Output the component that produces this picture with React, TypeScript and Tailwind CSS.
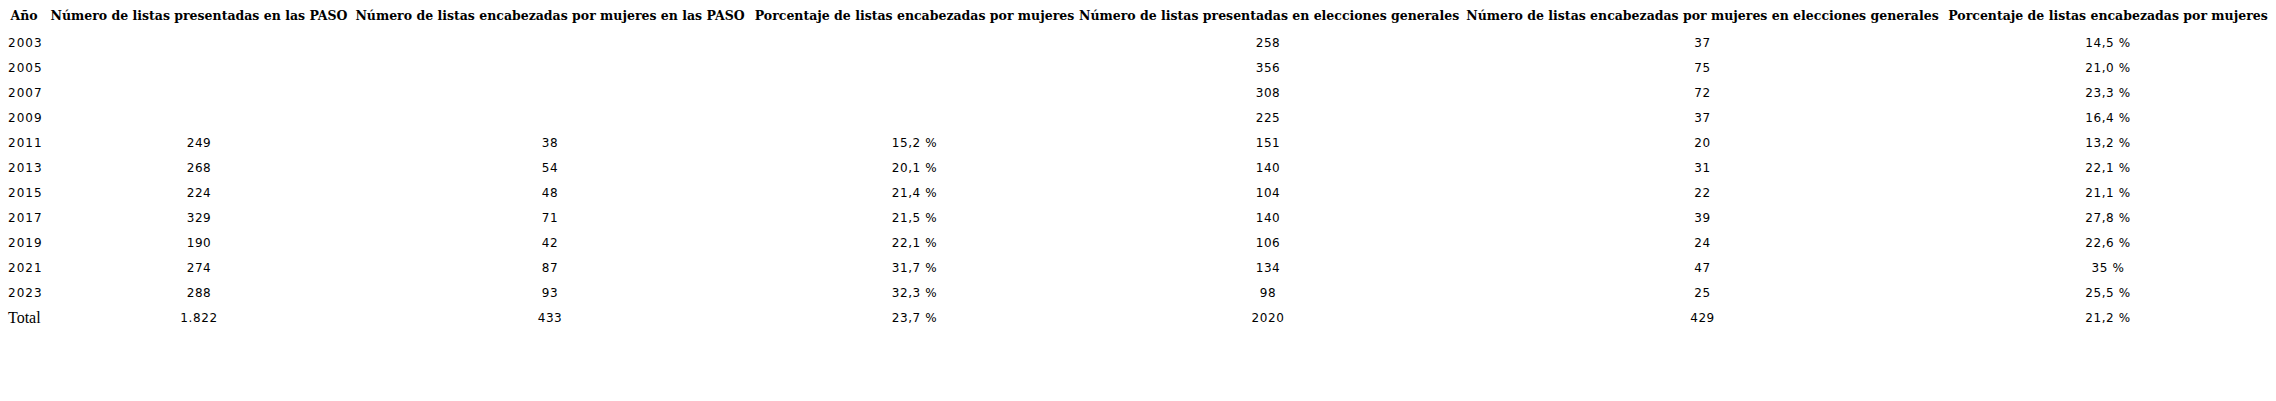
import React from "react";

const headers = [
  "Año",
  "Número de listas presentadas en las PASO",
  "Número de listas encabezadas por mujeres en las PASO",
  "Porcentaje de listas encabezadas por mujeres",
  "Número de listas presentadas en elecciones generales",
  "Número de listas encabezadas por mujeres en elecciones generales",
  "Porcentaje de listas encabezadas por mujeres",
];

const rows: string[][] = [
  ["2003", "", "", "", "258", "37", "14,5 %"],
  ["2005", "", "", "", "356", "75", "21,0 %"],
  ["2007", "", "", "", "308", "72", "23,3 %"],
  ["2009", "", "", "", "225", "37", "16,4 %"],
  ["2011", "249", "38", "15,2 %", "151", "20", "13,2 %"],
  ["2013", "268", "54", "20,1 %", "140", "31", "22,1 %"],
  ["2015", "224", "48", "21,4 %", "104", "22", "21,1 %"],
  ["2017", "329", "71", "21,5 %", "140", "39", "27,8 %"],
  ["2019", "190", "42", "22,1 %", "106", "24", "22,6 %"],
  ["2021", "274", "87", "31,7 %", "134", "47", "35 %"],
  ["2023", "288", "93", "32,3 %", "98", "25", "25,5 %"],
  ["Total", "1.822", "433", "23,7 %", "2020", "429", "21,2 %"],
];

export default function App() {
  return (
    <div className="w-[2276px] h-[401px] bg-white text-black overflow-hidden">
      <table className="table-fixed border-collapse w-[2268px]">
        <colgroup>
          <col className="w-[48px]" />
          <col className="w-[302px]" />
          <col className="w-[400px]" />
          <col className="w-[329px]" />
          <col className="w-[378px]" />
          <col className="w-[491px]" />
          <col className="w-[320px]" />
        </colgroup>
        <thead>
          <tr className="h-[30px]">
            {headers.map((h, i) => (
              <th
                key={i}
                className="p-0 pt-[3px] text-center whitespace-nowrap font-bold text-[12.5px] [font-family:'DejaVu_Serif',serif]"
              >
                {h}
              </th>
            ))}
          </tr>
        </thead>
        <tbody>
          {rows.map((r, ri) => (
            <tr key={ri} className="h-[25px]">
              {r.map((c, ci) =>
                ci === 0 ? (
                  <td
                    key={ci}
                    className={
                      c === "Total"
                        ? "p-0 pl-[8px] text-left whitespace-nowrap text-[16px] [font-family:'Liberation_Serif',serif]"
                        : "p-0 pl-[8px] text-left whitespace-nowrap text-[12px] tracking-[1px] [font-family:'DejaVu_Sans',sans-serif]"
                    }
                  >
                    {c}
                  </td>
                ) : (
                  <td
                    key={ci}
                    className="p-0 text-center whitespace-nowrap text-[12px] tracking-[0.6px] [font-family:'DejaVu_Sans',sans-serif]"
                  >
                    {c}
                  </td>
                )
              )}
            </tr>
          ))}
        </tbody>
      </table>
    </div>
  );
}
